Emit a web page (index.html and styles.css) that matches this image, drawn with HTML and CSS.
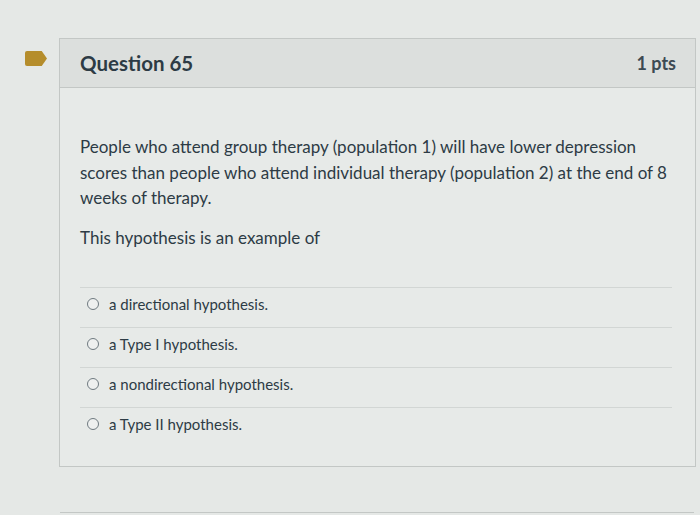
FILE: index.html
```html
<!DOCTYPE html>
<html>
<head>
<meta charset="utf-8">
<link rel="stylesheet" href="styles.css">
</head>
<body>
<div class="page">
  <div class="row">
    <div class="marker"></div>
    <div class="card">
      <div class="card-header">
        <h2 class="title">Question 65</h2>
        <span class="pts">1 pts</span>
      </div>
      <div class="card-body">
        <p class="text">People who attend group therapy (population 1) will have lower depression scores than people who attend individual therapy (population 2) at the end of 8 weeks of therapy.</p>
        <p class="text">This hypothesis is an example of</p>
        <div class="answers">
          <label class="answer"><span class="radio"></span>a directional hypothesis.</label>
          <label class="answer"><span class="radio"></span>a Type I hypothesis.</label>
          <label class="answer"><span class="radio"></span>a nondirectional hypothesis.</label>
          <label class="answer"><span class="radio"></span>a Type II hypothesis.</label>
        </div>
      </div>
    </div>
  </div>
  <div class="next-card"></div>
</div>
</body>
</html>
```
FILE: styles.css
```css
html, body {
  margin: 0;
  padding: 0;
}
body {
  background: #e5e8e6;
  font-family: Lato, "Open Sans", sans-serif;
  color: #2d3b45;
  width: 700px;
  height: 515px;
  overflow: hidden;
}
.page {
  padding-top: 38px;
}
.row {
  display: flex;
  align-items: flex-start;
  padding-left: 25px;
  gap: 12px;
}
.marker {
  width: 22px;
  height: 15px;
  margin-top: 13px;
  background: #b58d2c;
  clip-path: polygon(0 0, 76% 0, 100% 50%, 76% 100%, 0 100%);
  border-radius: 2px;
}
.card {
  width: 635px;
  border: 1px solid #c3c7c5;
  background: #e7eae8;
}
.card-header {
  display: flex;
  justify-content: space-between;
  align-items: center;
  height: 48px;
  padding: 0 19px 0 20px;
  background: #dcdfdd;
  border-bottom: 1px solid #c3c7c5;
}
.title {
  margin: 0;
  font-size: 20.5px;
  font-weight: 700;
  color: #2d3b45;
}
.pts {
  font-size: 18px;
  font-weight: 700;
  color: #3d4a52;
}
.card-body {
  padding: 46px 14px 19px 20px;
}
.text {
  margin: 0 0 14.5px 0;
  font-size: 17px;
  line-height: 25.5px;
  color: #2d3b45;
}
.answers {
  margin-top: 36px;
  margin-right: 9px;
}
.answer {
  display: flex;
  align-items: center;
  gap: 10px;
  height: 30px;
  padding: 1px 0 8px 7px;
  border-top: 1px solid #d2d6d4;
  font-size: 15px;
  color: #2d3b45;
}
.radio {
  width: 12px;
  height: 12px;
  border: 1.3px solid #6f7a80;
  border-radius: 50%;
  box-sizing: border-box;
  background: #eef0ef;
}
.next-card {
  margin: 45px 6px 0 60px;
  border-top: 1px solid #c3c7c5;
  height: 10px;
}
```
